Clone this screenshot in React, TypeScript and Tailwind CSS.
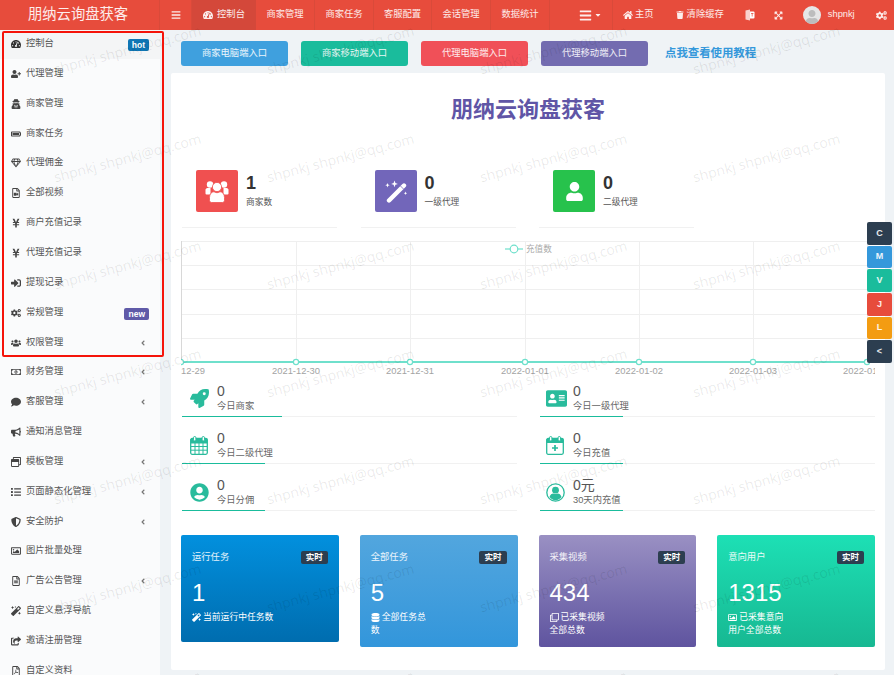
import type { ReactNode } from 'react';
import {
  FaAddressCard,
  FaAngleLeft,
  FaBars,
  FaBatteryFull,
  FaBullhorn,
  FaCaretDown,
  FaCogs,
  FaComment,
  FaDatabase,
  FaExpandArrowsAlt,
  FaHome,
  FaList,
  FaMagic,
  FaRegClone,
  FaRegFileAlt,
  FaRegFilePdf,
  FaRegFileVideo,
  FaRegGem,
  FaRegImage,
  FaRegMoneyBillAlt,
  FaRegWindowRestore,
  FaRocket,
  FaShareSquare,
  FaShieldAlt,
  FaSignInAlt,
  FaTachometerAlt,
  FaTrash,
  FaUser,
  FaUserCircle,
  FaUserPlus,
  FaUserSecret,
  FaUsers,
  FaYenSign,
} from 'react-icons/fa';

function GroupIcon() {
  return (
    <svg width="24" height="23" viewBox="0 0 24 23" fill="#fff">
      <circle cx="5" cy="4.5" r="3.2" />
      <circle cx="19" cy="4.5" r="3.2" />
      <path d="M0.5 9.5a2 2 0 0 1 2-1.5h3v6.5h-4a1 1 0 0 1-1-1zM23.5 9.5a2 2 0 0 0-2-1.5h-3v6.5h4a1 1 0 0 0 1-1z" />
      <circle cx="12" cy="7" r="4.6" stroke="#f05050" strokeWidth="0.8" />
      <path d="M4.5 17.5c0-3.5 2.2-5.8 4.5-5.8 1 .7 2 1 3 1s2-.3 3-1c2.3 0 4.5 2.3 4.5 5.8v3a2 2 0 0 1-2 2H6.5a2 2 0 0 1-2-2z" stroke="#f05050" strokeWidth="0.8" />
    </svg>
  );
}

function WandIcon() {
  return (
    <svg width="24" height="24" viewBox="0 0 24 24" fill="#fff">
      <line x1="5" y1="21.5" x2="20" y2="6.5" stroke="#fff" strokeWidth="4.4" strokeLinecap="round" />
      <line x1="16.5" y1="7" x2="19.5" y2="10" stroke="#7266ba" strokeWidth="0.8" />
      <path d="M3.5 4l.6 1.6 1.6.6-1.6.6-.6 1.6-.6-1.6-1.600-.6 1.600-.6zM10.500 1.500l.9 2.500 2.500.9-2.500.9-.9 2.500-.9-2.500-2.500-.9 2.500-.9zM21.500 12.500l.5 1.200 1.200.5-1.200.5-.5 1.200-.5-1.200-1.200-.5 1.200-.5z" />
    </svg>
  );
}

function CalendarGridIcon() {
  return (
    <svg width="18" height="19" viewBox="0 0 18 19" fill="none" stroke="currentColor" strokeWidth="1">
      <rect x="0.7" y="2.5" width="16.6" height="15.8" rx="1.5" strokeWidth="1.3" />
      <path d="M1 3h16v4H1z" fill="currentColor" />
      <path d="M1 10.500h16M1 14.200h16M5 7v11M9 7v11M13 7v11" />
      <rect x="3.5" y="0.5" width="2.4" height="4.5" rx="1.2" fill="#fff" strokeWidth="1" />
      <rect x="12.1" y="0.5" width="2.4" height="4.5" rx="1.2" fill="#fff" strokeWidth="1" />
    </svg>
  );
}

function CalendarPlusIcon() {
  return (
    <svg width="18" height="19" viewBox="0 0 18 19" fill="none" stroke="currentColor">
      <rect x="0.7" y="2.5" width="16.6" height="15.8" rx="1.5" strokeWidth="1.3" />
      <path d="M1 3h16v3.5H1z" fill="currentColor" />
      <path d="M9 9v6M6 12h6" strokeWidth="1.7" />
      <rect x="3.5" y="0.5" width="2.4" height="4.5" rx="1.2" fill="#fff" />
      <rect x="12.1" y="0.5" width="2.4" height="4.5" rx="1.2" fill="#fff" />
    </svg>
  );
}

function RingUserIcon() {
  return (
    <svg width="19" height="19" viewBox="0 0 19 19" fill="currentColor">
      <circle cx="9.5" cy="9.5" r="8.7" fill="none" stroke="currentColor" strokeWidth="1.3" />
      <circle cx="9.5" cy="7.2" r="3.4" />
      <path d="M3.5 14c.6-2.4 2.5-3.5 3.7-3.5.7.4 1.5.6 2.3.6s1.600-.2 2.300-.6c1.200 0 3.100 1.100 3.700 3.500-1.400 1.900-3.500 3.200-6 3.200s-4.600-1.300-6-3.200z" />
    </svg>
  );
}

function LangIcon() {
  return (
    <svg width="10" height="12" viewBox="0 0 10 12" fill="#fff">
      <path d="M0.5 1.500L5 0.5v11l-4.500-1z" opacity="0.75" />
      <path d="M5 2.500h3.500a1 1 0 0 1 1 1v5a1 1 0 0 1-1 1H5z" />
      <path d="M6 4.500h2.500M7.200 4v3.500" stroke="#e74c3c" strokeWidth="0.7" />
    </svg>
  );
}

const topNav = [
  { label: '商家管理', width: 'w-[59px]' },
  { label: '商家任务', width: 'w-[59px]' },
  { label: '客服配置', width: 'w-[58px]' },
  { label: '会话管理', width: 'w-[59px]' },
  { label: '数据统计', width: 'w-[59px]' },
];

const sideMenu: { label: string; icon: ReactNode; arrow?: boolean; badge?: 'hot' | 'new' }[] = [
  { label: '代理管理', icon: <FaUserPlus /> },
  { label: '商家管理', icon: <FaUserSecret /> },
  { label: '商家任务', icon: <FaBatteryFull /> },
  { label: '代理佣金', icon: <FaRegGem /> },
  { label: '全部视频', icon: <FaRegFileVideo /> },
  { label: '商户充值记录', icon: <FaYenSign /> },
  { label: '代理充值记录', icon: <FaYenSign /> },
  { label: '提现记录', icon: <FaSignInAlt /> },
  { label: '常规管理', icon: <FaCogs />, badge: 'new' },
  { label: '权限管理', icon: <FaUsers />, arrow: true },
  { label: '财务管理', icon: <FaRegMoneyBillAlt />, arrow: true },
  { label: '客服管理', icon: <FaComment />, arrow: true },
  { label: '通知消息管理', icon: <FaBullhorn /> },
  { label: '模板管理', icon: <FaRegWindowRestore />, arrow: true },
  { label: '页面静态化管理', icon: <FaList />, arrow: true },
  { label: '安全防护', icon: <FaShieldAlt />, arrow: true },
  { label: '图片批量处理', icon: <FaRegImage /> },
  { label: '广告公告管理', icon: <FaRegFileAlt />, arrow: true },
  { label: '自定义悬浮导航', icon: <FaMagic /> },
  { label: '邀请注册管理', icon: <FaShareSquare /> },
  { label: '自定义资料', icon: <FaRegFilePdf /> },
];

const entryButtons = [
  { label: '商家电脑端入口', color: 'bg-[#3fa0de]' },
  { label: '商家移动端入口', color: 'bg-[#1abc9c]' },
  { label: '代理电脑端入口', color: 'bg-[#f05058]' },
  { label: '代理移动端入口', color: 'bg-[#736cb0]' },
];

const topStats = [
  { value: '1', label: '商家数', color: 'bg-[#f05050]', icon: <GroupIcon /> },
  { value: '0', label: '一级代理', color: 'bg-[#7266ba]', icon: <WandIcon /> },
  { value: '0', label: '二级代理', color: 'bg-[#27c24c]', icon: <FaUser className="text-[19px]" /> },
];

const todayLeft = [
  { value: '0', label: '今日商家', icon: <FaRocket className="text-[19px]" />, bar: 'w-[100px]' },
  { value: '0', label: '今日二级代理', icon: <CalendarGridIcon />, bar: 'w-[83px]' },
  { value: '0', label: '今日分佣', icon: <FaUserCircle className="text-[19px]" />, bar: 'w-[83px]' },
];

const todayRight = [
  { value: '0', label: '今日一级代理', icon: <FaAddressCard className="text-[21px]" />, bar: 'w-[83px]' },
  { value: '0', label: '今日充值', icon: <CalendarPlusIcon />, bar: 'w-[83px]' },
  { value: '0元', label: '30天内充值', icon: <RingUserIcon />, bar: 'w-[83px]' },
];

const bottomCards = [
  {
    title: '运行任务',
    value: '1',
    icon: <FaMagic />,
    lines: ['当前运行中任务数'],
    color: 'from-[#0290de] to-[#006daf]',
  },
  {
    title: '全部任务',
    value: '5',
    icon: <FaDatabase />,
    lines: ['全部任务总', '数'],
    color: 'from-[#52a6de] to-[#3296db]',
  },
  {
    title: '采集视频',
    value: '434',
    icon: <FaRegClone />,
    lines: ['已采集视频', '全部总数'],
    color: 'from-[#9a90c3] to-[#5f549f]',
  },
  {
    title: '意向用户',
    value: '1315',
    icon: <FaRegImage />,
    lines: ['已采集意向', '用户全部总数'],
    color: 'from-[#1de0b5] to-[#17b892]',
  },
];

const floatButtons = [
  { label: 'C', color: 'bg-[#2c3e50]' },
  { label: 'M', color: 'bg-[#3498db]' },
  { label: 'V', color: 'bg-[#1abc9c]' },
  { label: 'J', color: 'bg-[#e74c3c]' },
  { label: 'L', color: 'bg-[#f39c12]' },
  { label: '<', color: 'bg-[#2c3e50]' },
];

const chartX = [0, 115, 229, 344, 458, 572, 686];
const chartDates = ['2021-12-29', '2021-12-30', '2021-12-31', '2022-01-01', '2022-01-02', '2022-01-03', '2022-01-04'];

function TrendChart() {
  return (
    <svg width="694" height="150" className="block overflow-hidden">
      {[13.5, 37.5, 61.5, 86.5, 110.5].map(y => (
        <line key={y} x1="0" x2="694" y1={y} y2={y} stroke="#efefef" />
      ))}
      {chartX.slice(1).map(x => (
        <line key={x} x1={x + 0.5} x2={x + 0.5} y1="13" y2="134" stroke="#efefef" />
      ))}
      <line x1="0.5" x2="0.5" y1="13" y2="134" stroke="#d8d8d8" />
      <line x1="0" x2="694" y1="134" y2="134" stroke="#6fe0cc" strokeWidth="2" />
      {chartX.map(x => (
        <circle key={x} cx={x} cy="134" r="2.6" fill="#fff" stroke="#6fe0cc" strokeWidth="1.2" />
      ))}
      {chartX.map((x, i) => (
        <text key={x} x={x} y="146" textAnchor="middle" fontSize="9.4" fill="#a3a3a3">
          {chartDates[i]}
        </text>
      ))}
      <line x1="324" x2="342" y1="21" y2="21" stroke="#6fe0cc" strokeWidth="1.2" />
      <circle cx="333" cy="21" r="3.8" fill="#fff" stroke="#6fe0cc" strokeWidth="1.2" />
      <text x="345" y="24" fontSize="8.6" fill="#aaa">
        充值数
      </text>
    </svg>
  );
}

function TodayRow({ item, left }: { item: (typeof todayLeft)[number]; left: string }) {
  return (
    <div className="relative h-10 border-b border-[#f1f1f1]">
      <div className={`flex items-start pt-[6px] ${left}`}>
        <span className="flex h-[30px] w-[28px] items-center justify-start text-[#29bb9c]">{item.icon}</span>
        <div className="ml-[-1px]">
          <p className="text-[14px] leading-[17px] text-[#555]">{item.value}</p>
          <p className="mt-px text-[9.3px] leading-[11px] text-[#666]">{item.label}</p>
        </div>
      </div>
      <div className={`absolute bottom-[-1px] left-0 h-px bg-[#1abc9c] ${item.bar}`} />
    </div>
  );
}

export default function App() {
  return (
    <div className="relative h-[675px] w-[894px] overflow-hidden bg-[#eff3f6] font-[family-name:'Liberation_Sans','Noto_Sans_CJK_SC',sans-serif]">
      {/* Header */}
      <header className="flex h-[30px] items-stretch bg-[#e74c3c] text-[9.3px] text-white/90">
        <div className="flex w-[160px] items-center border-r border-[#d94a3a] pl-[28px] text-[14.3px] text-white/90">
          朋纳云询盘获客
        </div>
        <div className="flex w-[32px] items-center justify-center border-r border-[#d94a3a] text-[10px]">
          <FaBars />
        </div>
        <div className="flex w-[64px] items-center justify-center gap-1 bg-[#d4483a] text-[9.3px]">
          <FaTachometerAlt className="text-[10px]" />
          控制台
        </div>
        {topNav.map(item => (
          <div key={item.label} className={`flex items-center justify-center border-r border-[#d94a3a] ${item.width}`}>
            {item.label}
          </div>
        ))}
        <div className="flex w-[63px] items-center justify-end gap-[2px] border-r border-[#d94a3a] pr-[10px] text-[13px]">
          <FaBars />
          <FaCaretDown className="text-[8px]" />
        </div>
        <div className="ml-[10px] flex items-center gap-[2px]">
          <FaHome className="text-[10px]" />
          主页
        </div>
        <div className="ml-[22px] flex items-center gap-[3px]">
          <FaTrash className="text-[8px]" />
          清除缓存
        </div>
        <div className="ml-[21px] flex items-center">
          <LangIcon />
        </div>
        <div className="ml-[19px] flex items-center text-[9px]">
          <FaExpandArrowsAlt />
        </div>
        <div className="ml-[20px] flex items-center">
          <span className="relative flex h-[18px] w-[18px] items-end justify-center overflow-hidden rounded-full bg-[#e6e6e6] text-[14px] text-[#bdbdbd]">
            <FaUser />
          </span>
          <span className="ml-[7px]">shpnkj</span>
        </div>
        <div className="ml-[21px] flex items-center text-[11px]">
          <FaCogs />
        </div>
      </header>

      <div className="flex">
        {/* Sidebar */}
        <aside className="h-[645px] w-[160px] shrink-0 overflow-hidden bg-[#fafbfc] text-[9.3px] text-[#555]">
          <div className="flex h-[29px] items-center bg-[#f4f5f6] pb-[2px] pl-[11px] pr-[11px]">
            <span className="w-[15px] text-[10px] text-[#333]">
              <FaTachometerAlt />
            </span>
            <span className="flex-1">控制台</span>
            <span className="mt-[2px] rounded-[2px] bg-[#0f76b5] px-[4px] text-[8.5px] leading-[12px] font-bold text-white">hot</span>
          </div>
          {sideMenu.map(item => (
            <div key={item.label} className="flex h-[29.85px] items-center pl-[11px] pr-[11px]">
              <span className="w-[15px] text-[10px] text-[#444]">{item.icon}</span>
              <span className="flex-1">{item.label}</span>
              {item.arrow && <FaAngleLeft className="mr-[2px] text-[8px] text-[#777]" />}
              {item.badge && (
                <span className="mt-[2px] rounded-[2px] bg-[#5f5aa8] px-[4px] text-[8.5px] leading-[12px] font-bold text-white">
                  {item.badge}
                </span>
              )}
            </div>
          ))}
        </aside>

        {/* Main */}
        <main className="w-[725px] pl-[11px] pt-[11px]">
          <div className="ml-[10px] flex items-center gap-[13px]">
            {entryButtons.map(btn => (
              <div
                key={btn.label}
                className={`flex h-[25px] w-[107px] items-center justify-center rounded-[3px] text-[9.3px] text-white/90 ${btn.color}`}
              >
                {btn.label}
              </div>
            ))}
            <span className="ml-[4px] text-[11.4px] font-bold text-[#3498db]">点我查看使用教程</span>
          </div>

          <section className="mt-[7px] h-[597px] w-[714px] rounded-[2px] bg-white px-[10px]">
            <h1 className="flex h-[72px] items-center justify-center text-[22px] font-bold text-[#6055a6]">
              朋纳云询盘获客
            </h1>

            <div className="flex gap-[23.5px] pl-px pt-[25px]">
              {topStats.map(stat => (
                <div key={stat.label} className="flex h-[58px] w-[155px] border-b border-[#f1f1f1] pl-[14px]">
                  <div className={`flex h-[42px] w-[42px] items-center justify-center rounded-[2px] text-white ${stat.color}`}>
                    {stat.icon}
                  </div>
                  <div className="ml-2">
                    <p className="mt-[3px] text-[18px] leading-[20px] font-bold text-[#333]">{stat.value}</p>
                    <p className="mt-[3px] text-[8.7px] leading-[12px] text-[#555]">{stat.label}</p>
                  </div>
                </div>
              ))}
            </div>

            <TrendChart />

            <div className="mt-[-1px] flex gap-[23px] pl-px">
              <div className="flex w-[335px] flex-col gap-[7px]">
                {todayLeft.map(item => (
                  <TodayRow key={item.label} item={item} left="pl-[8px]" />
                ))}
              </div>
              <div className="flex w-[335px] flex-col gap-[7px]">
                {todayRight.map(item => (
                  <TodayRow key={item.label} item={item} left="pl-[6px]" />
                ))}
              </div>
            </div>

            <div className="mt-[24px] grid grid-cols-4 items-start gap-[21px]">
              {bottomCards.map((card, idx) => (
                <div
                  key={card.title}
                  className={`rounded-[2px] bg-gradient-to-b px-[11px] pb-[11px] pt-[16px] text-white ${card.color} ${idx === 0 ? 'h-[107px]' : 'h-[112px]'}`}
                >
                  <div className="flex items-center justify-between">
                    <span className="text-[9.3px] text-white/90">{card.title}</span>
                    <span className="rounded-[2px] bg-[#2c3e50] px-[5px] text-[8.5px] leading-[13px] font-bold">实时</span>
                  </div>
                  <p className="mt-[13px] text-[24px] leading-[30px]">{card.value}</p>
                  <div className="mt-[3px] text-[8.8px] leading-[13px]">
                    {card.lines.map((line, i) => (
                      <p key={line} className="flex items-center gap-[2px]">
                        {i === 0 && <span className="text-[9px]">{card.icon}</span>}
                        {line}
                      </p>
                    ))}
                  </div>
                </div>
              ))}
            </div>
          </section>
        </main>
      </div>

      {/* Floating skin switcher */}
      <div className="absolute left-[867px] top-[222px] flex w-[25px] flex-col gap-px">
        {floatButtons.map((btn, i) => (
          <div
            key={i}
            className={`flex h-[22.7px] items-center justify-center rounded-[2px] text-[9px] font-bold text-white/90 ${btn.color}`}
          >
            {btn.label}
          </div>
        ))}
      </div>

      {/* Watermark */}
      <div className="pointer-events-none absolute left-0 right-0 top-[-4px] bottom-0 grid auto-rows-[107.5px] grid-cols-[repeat(4,213px)] overflow-hidden pl-[21px]">
        {Array.from({ length: 28 }, (_, i) => (
          <span key={i} className="flex rotate-[-15deg] items-center justify-center whitespace-nowrap font-['Open_Sans',sans-serif] text-[14px] text-black/[0.09]">
            shpnkj shpnkj@qq.com
          </span>
        ))}
      </div>

      {/* Highlight box on the annotated menu */}
      <div className="pointer-events-none absolute left-[2px] top-[31px] h-[326px] w-[162px] rounded-[2px] border-2 border-[#f5140a]" />
    </div>
  );
}
